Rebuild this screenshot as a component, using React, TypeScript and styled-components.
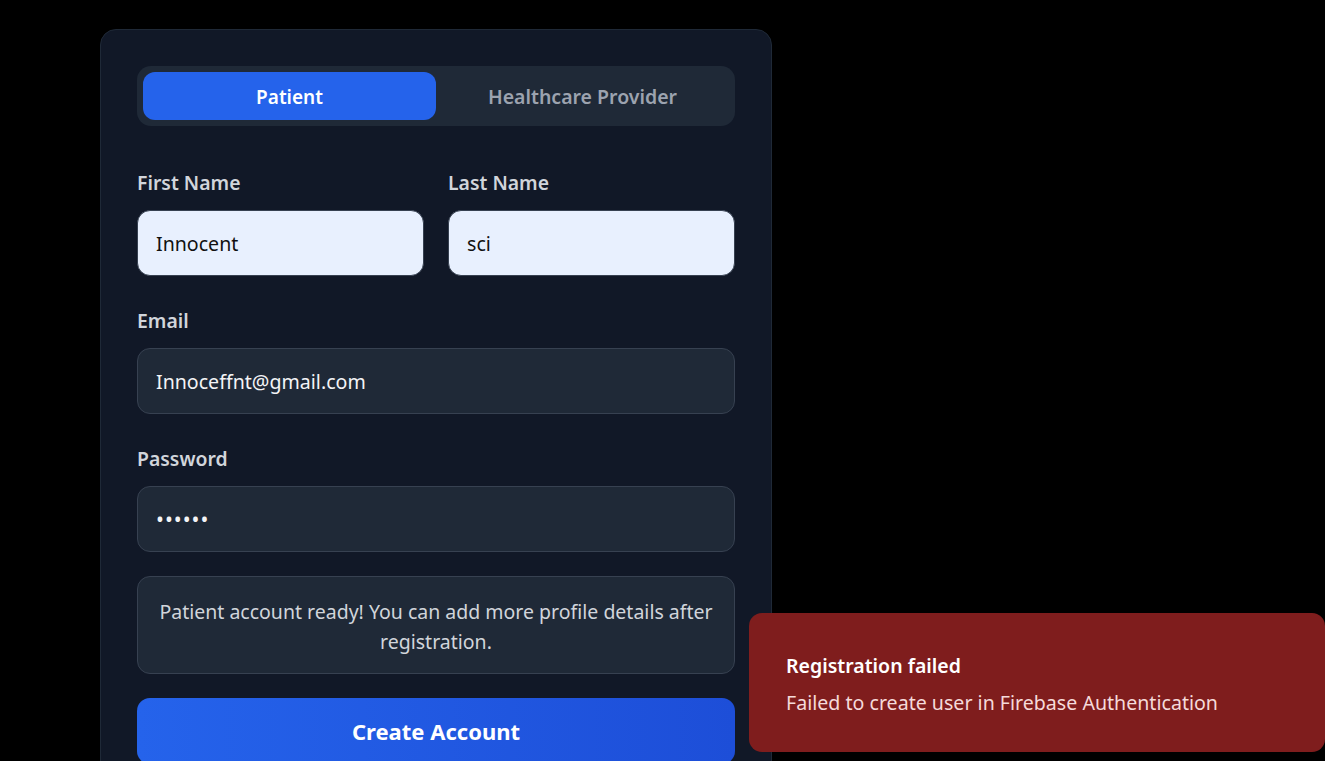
import styled, { createGlobalStyle } from 'styled-components';
import { useState } from 'react';

const GlobalStyle = createGlobalStyle`
  * {
    box-sizing: border-box;
  }
  html, body {
    margin: 0;
    background: #000000;
    font-family: 'Noto Sans', 'Open Sans', sans-serif;
  }
`;

type Role = 'patient' | 'provider';

const App = () => {
  const [role, setRole] = useState<Role>('patient');
  const [firstName, setFirstName] = useState('Innocent');
  const [lastName, setLastName] = useState('sci');
  const [email, setEmail] = useState('Innoceffnt@gmail.com');
  const [password, setPassword] = useState('secret');

  return (
    <>
      <GlobalStyle />
      <Page>
        <Card>
          <Tabs>
            <Tab $active={role === 'patient'} onClick={() => setRole('patient')}>
              Patient
            </Tab>
            <Tab $active={role === 'provider'} onClick={() => setRole('provider')}>
              Healthcare Provider
            </Tab>
          </Tabs>

          <NameRow>
            <Field>
              <Label>First Name</Label>
              <Input $autofill value={firstName} onChange={(e) => setFirstName(e.target.value)} />
            </Field>
            <Field>
              <Label>Last Name</Label>
              <Input $autofill value={lastName} onChange={(e) => setLastName(e.target.value)} />
            </Field>
          </NameRow>

          <Field>
            <Label>Email</Label>
            <Input type="email" value={email} onChange={(e) => setEmail(e.target.value)} />
          </Field>

          <Field>
            <Label>Password</Label>
            <Input type="password" value={password} onChange={(e) => setPassword(e.target.value)} />
          </Field>

          <InfoBox>
            Patient account ready! You can add more profile details after registration.
          </InfoBox>

          <SubmitButton type="button">Create Account</SubmitButton>
        </Card>
      </Page>

      <Toast>
        <ToastTitle>Registration failed</ToastTitle>
        <ToastText>Failed to create user in Firebase Authentication</ToastText>
      </Toast>
    </>
  );
};

export default App;

const Page = styled.div`
  height: 761px;
  overflow: hidden;
  padding: 29px 0 0 100px;
`;

const Card = styled.div`
  width: 672px;
  background: #111827;
  border: 1px solid #1f2937;
  border-radius: 16px;
  padding: 36px 36px 40px;
`;

const Tabs = styled.div`
  display: grid;
  grid-template-columns: 1fr 1fr;
  height: 60px;
  padding: 6px;
  margin-bottom: 36px;
  background: #1f2937;
  border-radius: 14px;
`;

const Tab = styled.button<{ $active: boolean }>`
  border: none;
  border-radius: 12px;
  padding-top: 2px;
  font-family: inherit;
  font-size: ${(p) => (p.$active ? '19px' : '19.5px')};
  font-weight: 600;
  cursor: pointer;
  color: ${(p) => (p.$active ? '#ffffff' : '#9ca3af')};
  background: ${(p) => (p.$active ? '#2563eb' : 'transparent')};
`;

const NameRow = styled.div`
  display: grid;
  grid-template-columns: 1fr 1fr;
  gap: 24px;
`;

const Field = styled.div`
  display: flex;
  flex-direction: column;
  margin-bottom: 24px;
`;

const Label = styled.label`
  margin: 6px 0 12px;
  font-size: 19.4px;
  line-height: 30px;
  font-weight: 600;
  color: #d1d5db;
`;

const Input = styled.input<{ $autofill?: boolean }>`
  height: 66px;
  width: 100%;
  padding: 0 18px;
  border: 1px solid #374151;
  border-radius: 13px;
  font-family: inherit;
  font-size: 19.6px;
  outline: none;
  color: ${(p) => (p.$autofill ? '#111111' : '#f3f4f6')};
  background: ${(p) => (p.$autofill ? '#e8f0fe' : '#1f2937')};

  &[type='password'] {
    font-size: 21px;
    letter-spacing: 1px;
  }
`;

const InfoBox = styled.div`
  padding: 20px 16px 16px;
  margin-bottom: 24px;
  background: #1f2937;
  border: 1px solid #374151;
  border-radius: 13px;
  font-size: 19.5px;
  line-height: 30px;
  text-align: center;
  color: #d1d5db;
`;

const SubmitButton = styled.button`
  width: 100%;
  height: 66px;
  border: none;
  border-radius: 13px;
  font-family: inherit;
  font-size: 22px;
  font-weight: 700;
  color: #ffffff;
  cursor: pointer;
  background: linear-gradient(90deg, #2563eb, #1d4ed8);
`;

const Toast = styled.div`
  position: fixed;
  left: 749px;
  top: 613px;
  width: 576px;
  height: 139px;
  padding: 39px 37px 0;
  background: #7f1d1d;
  border-radius: 13px;
`;

const ToastTitle = styled.div`
  font-size: 19.5px;
  line-height: 28px;
  font-weight: 600;
  color: #ffffff;
`;

const ToastText = styled.div`
  margin-top: 9px;
  font-size: 19.6px;
  line-height: 28px;
  color: #f5dada;
`;
